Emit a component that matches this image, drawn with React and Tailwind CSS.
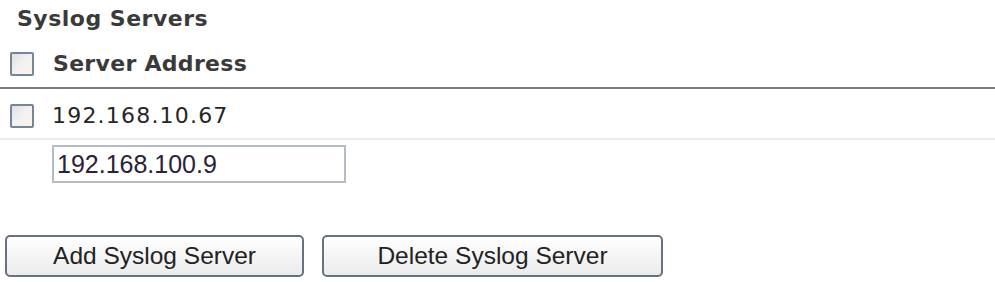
const Box = () => (
  <div className="h-[24px] w-[24px] shrink-0 rounded-[2px] border-2 border-[#75859a] bg-gradient-to-br from-[#dfe1e8] via-[#f3f1f1] to-[#fbf3ea]" />
);

const Button = ({ label, w }) => (
  <button
    className={`h-[42px] ${w} rounded-[5px] border-2 border-[#66727f] bg-gradient-to-b from-white to-[#ebebeb] text-[24.5px] leading-none text-[#222] font-['Liberation_Sans',Arial,sans-serif]`}
  >
    {label}
  </button>
);

export default function App() {
  return (
    <div className="h-[282px] w-[995px] overflow-hidden bg-white font-['DejaVu_Sans',Verdana,sans-serif] text-[#3a3a3a]">
      <div className="h-[44px] pl-[17px] pt-[8px] text-[22px] font-bold leading-none tracking-[0.5px]">
        Syslog Servers
      </div>

      <div className="h-[43px] pl-[10px] pt-[8px]">
        <div className="flex h-[24px] items-center gap-[19px]">
          <Box />
          <span className="text-[22px] font-bold leading-none tracking-[0.3px]">Server Address</span>
        </div>
      </div>
      <div className="h-[2px] bg-[#7d7d7d]" />

      <div className="h-[49px] pl-[10px] pt-[15px]">
        <div className="flex h-[24px] items-center gap-[18px]">
          <Box />
          <span className="text-[22px] leading-none tracking-[1.2px] text-[#262626]">192.168.10.67</span>
        </div>
      </div>
      <div className="h-[2px] bg-[#ececec]" />

      <div className="pl-[52px] pt-[5px]">
        <input
          type="text"
          defaultValue="192.168.100.9"
          className="h-[38px] w-[294px] border-2 border-[#b4bcc6] bg-white pl-[3px] text-[25px] text-[#2a2238] outline-none font-['Liberation_Sans',Arial,sans-serif]"
        />
      </div>

      <div className="flex gap-[18px] pl-[5px] pt-[52px]">
        <Button label="Add Syslog Server" w="w-[299px]" />
        <Button label="Delete Syslog Server" w="w-[341px]" />
      </div>
    </div>
  );
}
